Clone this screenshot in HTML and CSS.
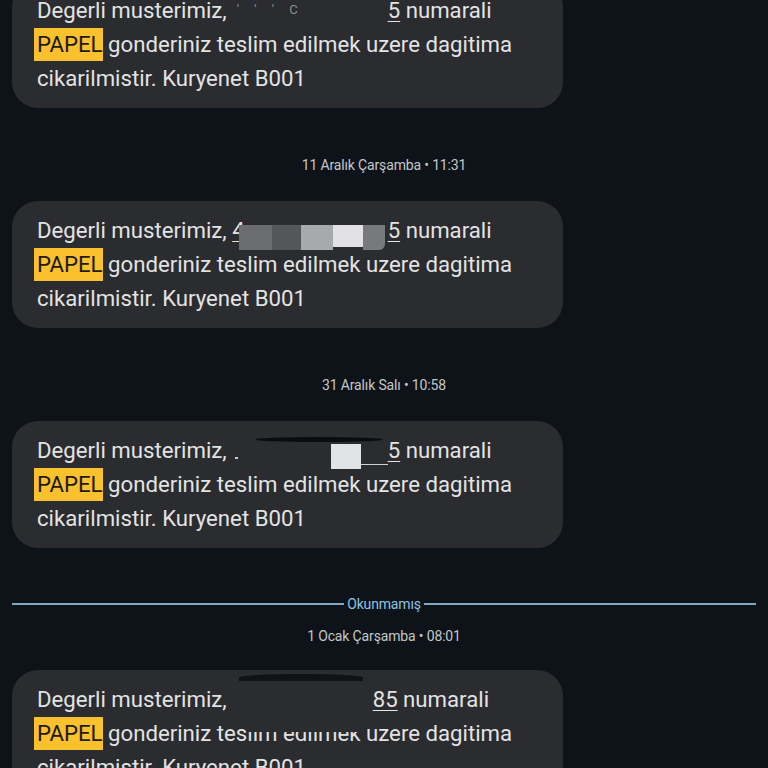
FILE: index.html
```html
<!DOCTYPE html>
<html lang="tr">
<head>
  <meta charset="UTF-8" />
  <meta name="viewport" content="width=device-width, initial-scale=1.0" />
  <title>Mesajlar</title>
  <link rel="stylesheet" href="styles.css">
</head>
<body>
  <div class="thread">
    <div class="bubble first">
      <p>Degerli musterimiz, <span class="num"><span class="hide">4</span><span class="redact r1"><i class="faint">' ' ' C</i></span><u>5</u></span> numarali
        <mark>PAPEL</mark> gonderiniz teslim edilmek uzere dagitima cikarilmistir. Kuryenet B001</p>
    </div>

    <div class="stamp">11 Aralık Çarşamba • 11:31</div>

    <div class="bubble">
      <p>Degerli musterimiz, <span class="num"><u>4</u><span class="redact r2"><b class="b1"></b><b class="b2"></b><b class="b3"></b><b class="b4"></b><b class="b5"></b></span><u>5</u></span> numarali
        <mark>PAPEL</mark> gonderiniz teslim edilmek uzere dagitima cikarilmistir. Kuryenet B001</p>
    </div>

    <div class="stamp">31 Aralık Salı • 10:58</div>

    <div class="bubble">
      <p>Degerli musterimiz, <span class="num"><span class="hide">4</span><span class="redact r3"><b class="dot"></b><b class="smear"></b><b class="white"></b><b class="line"></b></span><u>5</u></span> numarali
        <mark>PAPEL</mark> gonderiniz teslim edilmek uzere dagitima cikarilmistir. Kuryenet B001</p>
    </div>

    <div class="divider"><span>Okunmamış</span></div>
    <div class="stamp tight">1 Ocak Çarşamba • 08:01</div>

    <div class="bubble">
      <p>Degerli musterimiz, <span class="num"><span class="hide">4</span><span class="redact r4"><b class="smear"></b></span><u>85</u></span> numarali
        <mark>PAPEL</mark> gonderiniz tes<span class="erased">lim edilmek</span> uzere dagitima cikarilmistir. Kuryenet B001</p>
    </div>
  </div>
</body>
</html>
```

FILE: styles.css
```css
:root {
  --bg: #0e1319;
  --bubble: #2a2c2f;
  --text: #e3e3e3;
  --muted: #c4c7c8;
  --accent: #8cc4e4;
  --mark: #f9c12e;
}
* { box-sizing: border-box; margin: 0; padding: 0; }
html, body { background: var(--bg); }
body {
  font-family: Roboto, "Noto Sans", sans-serif;
  color: var(--text);
  height: 768px;
  overflow: hidden;
}
.thread { display: flex; flex-direction: column; margin-top: -19px; }
.bubble {
  background: var(--bubble);
  border-radius: 26px;
  width: 551px;
  margin-left: 12px;
  padding: 12px 18px 13px 25px;
  font-size: 22.2px;
  line-height: 34px;
}
mark {
  background: var(--mark);
  color: #1d1a10;
  padding: 3px 0 4px 3px;
  margin-left: -3px;
}
u { text-decoration: underline; text-underline-offset: 3px; text-decoration-thickness: 1px; }
.hide { color: transparent; }
.redact {
  display: inline-block;
  width: 143px;
  height: 22px;
  position: relative;
  vertical-align: -3px;
}
.redact b { position: absolute; display: block; }
.faint { font-style: normal; font-size: 13px; color: #8c8f92; position: absolute; left: -8px; top: -6px; letter-spacing: 6px; }
.r2 b { top: 6px; height: 25px; }
.r2 .b1 { left: -6px; width: 33px; background: #6a6c6f; }
.r2 .b2 { left: 27px; width: 29px; background: #545659; }
.r2 .b3 { left: 56px; width: 32px; background: #a8a9ab; }
.r2 .b4 { left: 88px; width: 30px; background: #e2e2e4; height: 22px; }
.r2 .b5 { left: 118px; width: 22px; background: #77797c; border-radius: 0 0 6px 0; }
.r3 .smear { left: 10px; top: -2px; width: 128px; height: 5px; background: #0b0c0e; border-radius: 50%; }
.r3 .white { left: 86px; top: 5px; width: 30px; height: 25px; background: #e2e3e5; }
.r3 .dot { left: -10px; top: 18px; width: 3px; height: 2px; background: #c8c8c8; }
.r3 .line { left: 116px; top: 25px; width: 27px; height: 1px; background: #d0d0d0; }
.r4 { width: 128px; }
.r4 .smear { left: -6px; top: -14px; width: 124px; height: 7px; background: #111214; border-radius: 50% 50% 0 0; }
.erased { position: relative; }
.erased::after {
  content: "";
  position: absolute;
  left: 0; right: 0;
  top: 4px;
  height: 8px;
  background: var(--bubble);
}
.stamp {
  text-align: center;
  font-size: 14px;
  color: var(--muted);
  line-height: 18px;
  margin: 48px 0 27px;
  letter-spacing: -0.15px;
}
.stamp.tight { margin: 14px 0 25px; }
.divider {
  display: flex;
  align-items: center;
  gap: 3px;
  margin: 47px 12px 0;
  color: var(--accent);
  font-size: 14px;
  line-height: 18px;
  letter-spacing: -0.15px;
}
.divider::before, .divider::after {
  content: "";
  flex: 1;
  height: 2px;
  background: var(--accent);
  opacity: 0.85;
}
```
